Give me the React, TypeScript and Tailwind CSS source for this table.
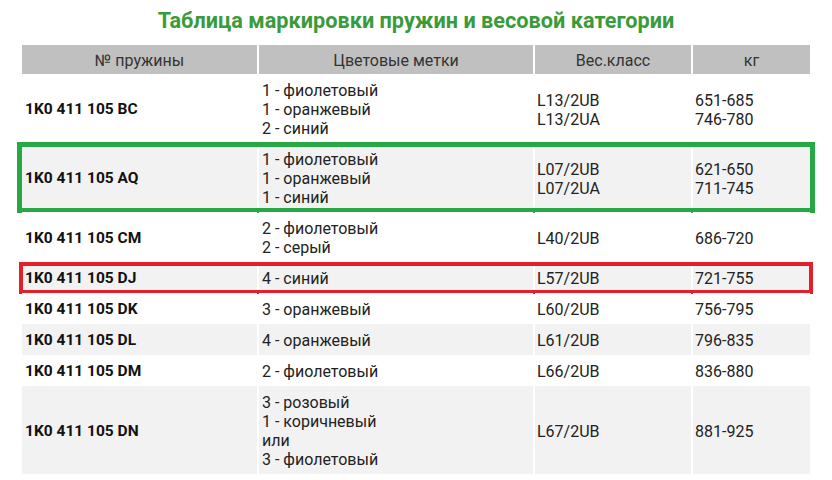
import React from "react";

type Row = {
  num: string;
  marks: string[];
  cls: string[];
  kg: string[];
  gray: boolean;
  box?: "green" | "red";
};

const rows: Row[] = [
  { num: "1K0 411 105 BC", marks: ["1 - фиолетовый", "1 - оранжевый", "2 - синий"], cls: ["L13/2UB", "L13/2UA"], kg: ["651-685", "746-780"], gray: false },
  { num: "1K0 411 105 AQ", marks: ["1 - фиолетовый", "1 - оранжевый", "1 - синий"], cls: ["L07/2UB", "L07/2UA"], kg: ["621-650", "711-745"], gray: true, box: "green" },
  { num: "1K0 411 105 CM", marks: ["2 - фиолетовый", "2 - серый"], cls: ["L40/2UB"], kg: ["686-720"], gray: false },
  { num: "1K0 411 105 DJ", marks: ["4 - синий"], cls: ["L57/2UB"], kg: ["721-755"], gray: true, box: "red" },
  { num: "1K0 411 105 DK", marks: ["3 - оранжевый"], cls: ["L60/2UB"], kg: ["756-795"], gray: false },
  { num: "1K0 411 105 DL", marks: ["4 - оранжевый"], cls: ["L61/2UB"], kg: ["796-835"], gray: true },
  { num: "1K0 411 105 DM", marks: ["2 - фиолетовый"], cls: ["L66/2UB"], kg: ["836-880"], gray: false },
  { num: "1K0 411 105 DN", marks: ["3 - розовый", "1 - коричневый", "или", "3 - фиолетовый"], cls: ["L67/2UB"], kg: ["881-925"], gray: true },
];

function Lines({ items }: { items: string[] }) {
  return (
    <>
      {items.map((t, i) => (
        <div key={i}>{t}</div>
      ))}
    </>
  );
}

export default function App() {
  return (
    <div className="w-[832px] h-[480px] bg-white px-[22px] overflow-hidden" style={{ fontFamily: "Roboto, 'Noto Sans', sans-serif" }}>
      <h1 className="pt-[8px] mb-[12px] text-center text-[21.7px] leading-[25px] font-bold text-[#3a9b3a]">
        Таблица маркировки пружин и весовой категории
      </h1>
      <div className="w-[788px] text-[16px] leading-[19px] text-[#222]">
        <div className="grid grid-cols-[235px_274px_156px_117px] gap-x-[2px] h-[29px] text-[#333]">
          <div className="bg-[#c0c0c0] flex items-center justify-center pt-[2px]">№ пружины</div>
          <div className="bg-[#c0c0c0] flex items-center justify-center pt-[2px]">Цветовые метки</div>
          <div className="bg-[#c0c0c0] flex items-center justify-center pt-[2px]">Вес.класс</div>
          <div className="bg-[#c0c0c0] flex items-center justify-center pt-[2px]">кг</div>
        </div>
        {rows.map((r, i) => {
          const bg = r.gray ? "bg-[#f2f2f2]" : "bg-white";
          return (
            <div key={i} className="relative grid grid-cols-[235px_274px_156px_117px] gap-x-[2px]">
              <div className={`${bg} pt-[7px] pb-[5px] pl-[3px] flex items-center font-bold text-[#111] text-[15.5px]`}>{r.num}</div>
              <div className={`${bg} pt-[7px] pb-[5px] pl-[3px] flex flex-col justify-center`}>
                <Lines items={r.marks} />
              </div>
              <div className={`${bg} pt-[7px] pb-[5px] pl-[2px] flex flex-col justify-center`}>
                <Lines items={r.cls} />
              </div>
              <div className={`${bg} pt-[7px] pb-[5px] pl-[2px] flex flex-col justify-center`}>
                <Lines items={r.kg} />
              </div>
              {r.box === "green" && (
                <div className="absolute -top-[1px] -bottom-[1px] -left-[5px] -right-[5px] border-[5px] border-[#28a745] pointer-events-none" />
              )}
              {r.box === "red" && (
                <div className="absolute top-0 -bottom-[1px] -left-[3px] -right-[3px] border-[4px] border-[#e0202a] pointer-events-none" />
              )}
            </div>
          );
        })}
      </div>
    </div>
  );
}
